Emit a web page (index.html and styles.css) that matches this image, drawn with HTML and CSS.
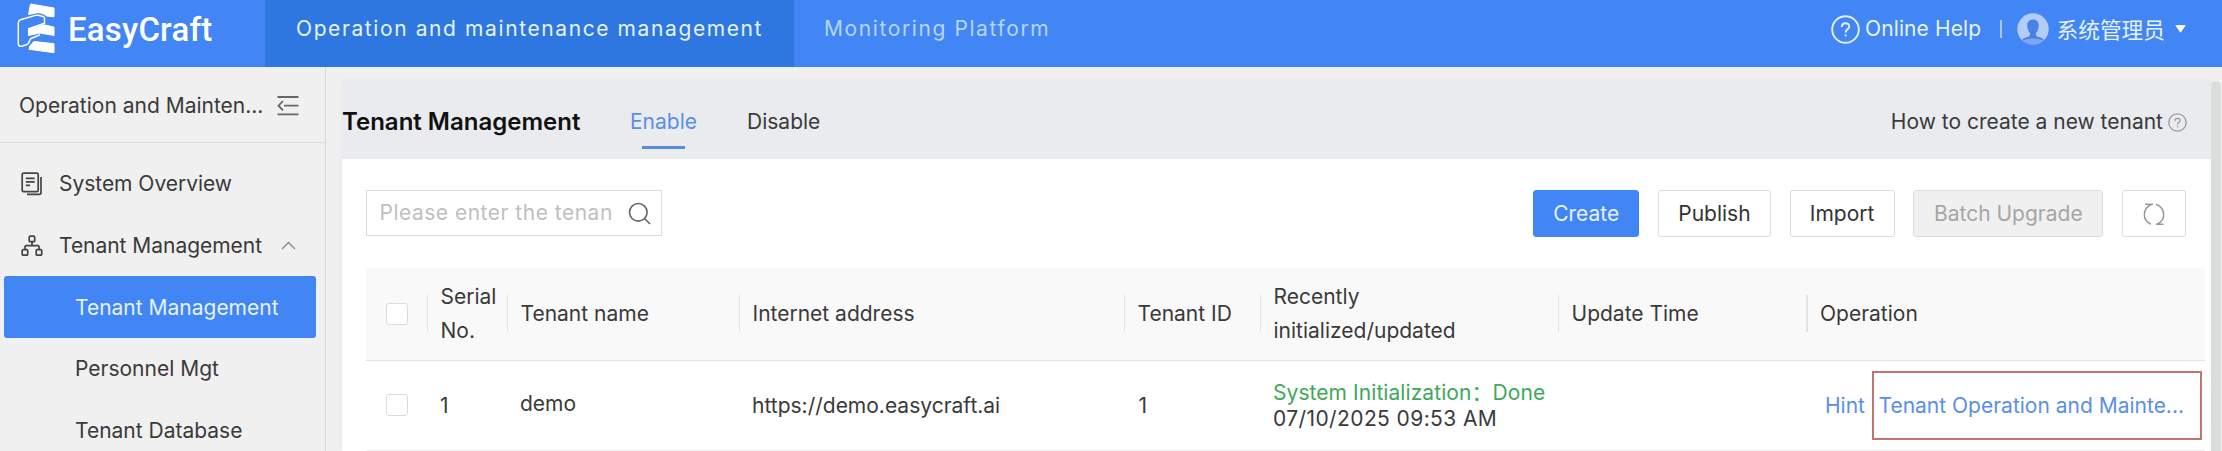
FILE: index.html
```html
<!DOCTYPE html>
<html lang="en">
<head>
<meta charset="utf-8">
<title>EasyCraft</title>
<link rel="stylesheet" href="styles.css">
</head>
<body>
<header class="topbar">
  <div class="brand">
    <svg class="brand-logo" width="40" height="52" viewBox="16 2 40 52">
      <g fill="#fff" stroke="#fff" stroke-width="1" stroke-linejoin="round">
        <path d="M30.5 4 54 8V16.8L46.500 16C45 14 41 12.700 37.500 12.700L28.500 14.500Z"/>
        <path d="M28.500 29.500 44 24.800 54 27V35.500L40 33 28.500 35.500Z"/>
        <path d="M30 45.500C32.500 44.500 32 42 34.500 41.500L54 43.700V52.700L29 49.300Z"/>
      </g>
      <path d="M28 29 44.500 23.200V18.500Q44.500 16.800 42.500 16.200L38 15.300Q36.500 15 34.500 15.600L20.500 19.800Q18.300 20.600 18.300 23V43.500Q18.500 46.800 21.500 46.300L26.500 44.800C30 43.500 28.500 40.500 31 38.500L40 34.800" fill="none" stroke="#fff" stroke-width="1.500"/>
    </svg>
    <span class="brand-name">EasyCraft</span>
  </div>
  <nav class="platforms">
    <a class="platform platform-active">Operation and maintenance management</a>
    <a class="platform">Monitoring Platform</a>
  </nav>
  <div class="account">
    <svg width="29" height="29" viewBox="0 0 29 29" fill="none" stroke="#e4f0ff" stroke-width="1.900">
      <circle cx="14.500" cy="14.500" r="13.300"/>
      <path d="M10.800 11.900C10.800 7 18.300 7 18.300 11.600C18.300 14.600 14.600 14.200 14.600 17.400"/>
      <path d="M14.600 19.300V21.400"/>
    </svg>
    <span class="help-label">Online Help</span>
    <span class="account-sep"></span>
    <svg class="avatar" width="32" height="32" viewBox="0 0 32 32">
      <circle cx="16" cy="16" r="15.700" fill="#b3cdfb"/>
      <path d="M16 6.500C12.300 6.500 10 9 10.200 12.700C10.400 16 11.500 18.500 13 20C13.500 22.500 12 23.600 9.500 24.300C7.500 24.900 6 25.500 5.200 27.200Q10 31.700 16 31.700T26.800 27.200C26 25.500 24.500 24.900 22.500 24.300C20 23.600 18.500 22.500 19 20C20.500 18.500 21.600 16 21.800 12.700C22 9 19.700 6.500 16 6.500Z" fill="#4a82e4"/>
      <path d="M5.200 27.200Q10 31.700 16 31.700T26.800 27.200Q16 24 5.200 27.200Z" fill="#7ba7f4"/>
    </svg>
    <span class="user-name">系统管理员</span>
    <svg width="11" height="8" viewBox="0 0 11 8"><path d="M.8.500H10.200L5.500 7.300Z" fill="#fff" stroke="#fff" stroke-linejoin="round" stroke-width=".8"/></svg>
  </div>
</header>

<div class="body">
  <aside class="sidebar">
    <div class="sidebar-head">
      <span>Operation and Mainten...</span>
      <svg width="22" height="22" viewBox="0 0 22 22" fill="none" stroke="#666" stroke-width="1.800"><path d="M.5 2H21.500M7 10.700H21.500M.5 19.300H21.500M6 6 1.500 10.700 6 15.400"/></svg>
    </div>
    <ul class="menu">
      <li class="menu-item">
        <svg class="menu-icon" width="22" height="24" viewBox="0 0 22 24" fill="none" stroke="#444" stroke-width="1.700"><rect x="1.200" y="1.200" width="16" height="18.500" rx="1.500"/><path d="M20 5V20.500Q20 22.300 18.200 22.300H6M4.800 6.300H13.700M4.800 9.800H13.700M4.800 13.300H9"/></svg>
        <span>System Overview</span>
      </li>
      <li class="menu-item">
        <svg class="menu-icon" width="22" height="22" viewBox="0 0 22 22" fill="none" stroke="#444" stroke-width="1.700"><rect x="8.200" y="1.200" width="5.500" height="5.500" rx="1"/><rect x="1.200" y="14.700" width="5.500" height="5.500" rx="1"/><rect x="15.200" y="14.700" width="5.500" height="5.500" rx="1"/><path d="M11 6.700V10.500M4 14.700V11.700Q4 10.600 5.100 10.600H16.900Q18 10.600 18 11.700V14.700"/></svg>
        <span>Tenant Management</span>
        <svg class="menu-chevron" width="15" height="9" viewBox="0 0 15 9" fill="none" stroke="#888" stroke-width="1.400"><path d="M1 8 7.500 1.500 14 8"/></svg>
      </li>
      <li class="menu-sub menu-sub-active">Tenant Management</li>
      <li class="menu-sub">Personnel Mgt</li>
      <li class="menu-sub">Tenant Database</li>
    </ul>
  </aside>

  <main class="content">
    <section class="panel">
      <div class="panel-head">
        <h1 class="panel-title">Tenant Management</h1>
        <a class="tab tab-active">Enable</a>
        <a class="tab">Disable</a>
        <span class="howto">How to create a new tenant</span>
        <svg width="19" height="19" viewBox="0 0 19 19" fill="none" stroke="#999" stroke-width="1.300"><circle cx="9.500" cy="9.500" r="8.700"/><path d="M7 7.700C7 4.500 12 4.500 12 7.600C12 9.600 9.500 9.300 9.500 11.500M9.500 12.700V14.200"/></svg>
      </div>
      <div class="toolbar">
        <div class="search">
          <span class="search-text">Please enter the tenan</span>
          <svg width="23" height="23" viewBox="0 0 23 23" fill="none" stroke="#666" stroke-width="1.600"><circle cx="10.300" cy="10.300" r="8.800"/><path d="M16.500 16.500 22 22"/></svg>
        </div>
        <div class="actions">
          <button class="btn btn-primary">Create</button>
          <button class="btn btn-publish">Publish</button>
          <button class="btn btn-import">Import</button>
          <button class="btn btn-disabled">Batch Upgrade</button>
          <button class="btn btn-refresh"><svg width="24" height="24" viewBox="0 0 24 24" fill="none" stroke="#999" stroke-width="1.500"><path d="M3 2.200H11M10 2.200C.5 6 -.5 18 9 22.200M14 2.200C23.500 6 24.500 18 15 22.200M14 22.200H21.500"/></svg></button>
        </div>
      </div>
      <div class="table">
        <div class="row row-head">
          <div class="th th-check"><span class="checkbox"></span></div>
          <div class="th"><span>Serial<br>No.</span></div>
          <div class="th">Tenant name</div>
          <div class="th">Internet address</div>
          <div class="th">Tenant ID</div>
          <div class="th"><span>Recently<br>initialized/updated</span></div>
          <div class="th">Update Time</div>
          <div class="th">Operation</div>
        </div>
        <div class="row row-data">
          <div class="td td-check"><span class="checkbox"></span></div>
          <div class="td">1</div>
          <div class="td td-name">demo</div>
          <div class="td">https://demo.easycraft.ai</div>
          <div class="td td-id">1</div>
          <div class="td td-status"><span class="status">System Initialization<span class="colon">：</span>Done</span><span class="date">07/10/2025 09:53 AM</span></div>
          <div class="td"></div>
          <div class="td td-ops"><a class="link">Hint</a><a class="link link-marked">Tenant Operation and Mainte...</a></div>
        </div>
      </div>
    </section>
    <div class="scrollbar"></div>
  </main>
</div>
</body>
</html>
```
FILE: styles.css
```css
* { box-sizing: border-box; }
body {
  margin: 0;
  width: 2222px;
  height: 451px;
  overflow: hidden;
  display: flex;
  flex-direction: column;
  font: 400 21px/26px Inter, "Noto Sans CJK SC", sans-serif;
  color: #3a3a3a;
  background: #f0f0f0;
  white-space: nowrap;
}
svg { display: block; flex: none; }

.topbar { display: flex; flex: none; height: 67px; background: #4285f4; }
.brand { display: flex; width: 265px; padding: 2px 0 0 16px; }
.brand-name {
  margin: 10px 0 0 12px;
  font: 500 33px/36px Roboto, sans-serif;
  letter-spacing: .2px;
  color: #fff;
}
.platforms { display: flex; }
.platform {
  padding: 16px 29px 0 30px;
  letter-spacing: 1.6px;
  color: #b5d5ff;
}
.platform-active { width: 529px; padding-left: 31px; background: #2e77e0; color: #e4f3ff; }
.account { display: flex; align-items: center; height: 58px; margin-left: auto; padding-right: 36px; color: #e4f3ff; }
.help-label { margin-left: 5px; width: 115px; letter-spacing: .1px; }
.account-sep { width: 1.5px; height: 18px; margin: 0 15px 0 20px; background: #a6c8fb; }
.user-name { margin: 0 10px 0 8px; font: 21.7px/26px "Noto Sans CJK SC", sans-serif; }

.body { display: flex; flex: 1; min-height: 0; }
.sidebar { width: 326px; flex: none; border-right: 1.5px solid #dadada; }
.sidebar-head {
  display: flex;
  align-items: center;
  justify-content: space-between;
  height: 76px;
  padding: 2px 26px 0 19px;
  border-bottom: 1.5px solid #dcdcdc;
}
.menu { list-style: none; margin: 0; padding: 10px 0 0; }
.menu-item { display: flex; align-items: center; height: 61.7px; padding-left: 21px; }
.menu-icon { margin-right: 16px; }
.menu-item span { padding-top: 1px; letter-spacing: -.03px; }
.menu-chevron { margin-left: 19px; }
.menu-sub { display: flex; align-items: center; height: 61.7px; margin: 0 9.500px 0 4px; padding: 1px 0 0 71px; }
.menu-sub-active { background: #4285f4; border-radius: 3px; color: #e4f3ff; }

.content { display: flex; flex: 1; padding-top: 13px; padding-left: 16px; }
.panel { width: 1869px; background: #fff; box-shadow: 0 0 4px rgba(0, 0, 0, .04); }
.panel-head { display: flex; align-items: center; height: 79px; padding: 5px 24px 0 0; background: #eaebef; }
.panel-title { margin: 0 50px 0 0; width: 238px; font-size: 24px; font-weight: 600; line-height: 30px; color: #111; }
.tab {
  position: relative;
  margin-right: 50px;
}
.tab-active { color: #5a8fe6; }
.tab-active::after {
  content: "";
  position: absolute;
  left: 12px;
  bottom: -14px;
  width: 43px;
  height: 3px;
  background: #5a8bdc;
}
.howto { margin-left: auto; margin-right: 5px; }
.toolbar { display: flex; justify-content: space-between; padding: 31px 25px 31px 24px; }
.search {
  display: flex;
  align-items: center;
  width: 296px;
  height: 46px;
  padding-left: 12.500px;
  border: 1.5px solid #dcdcdc;
}
.search-text { width: 235px; margin-right: 13px; letter-spacing: .5px; color: #bfbfbf; }
.actions { display: flex; gap: 18.7px; }
.btn {
  display: flex;
  align-items: center;
  justify-content: center;
  height: 47px;
  padding: 0;
  border: 1.5px solid #dcdcdc;
  border-radius: 3px;
  background: #fff;
  font: inherit;
  color: #333;
}
.btn-primary { width: 106px; background: #4285f4; border-color: #4285f4; color: #e4f3ff; }
.btn-publish { width: 113px; }
.btn-import { width: 105px; }
.btn-disabled { width: 190px; background: #f0f0f0; color: #a6a6a6; }
.btn-refresh { width: 64px; }

.table { margin: 0 6px 0 24px; }
.row { display: grid; grid-template-columns: 60.5px 80px 232px 385px 136px 298px 248.5px 1fr; }
.row-head { height: 92.5px; background: #f9f9f9; border-bottom: 1.5px solid #e2e2e2; line-height: 33.5px; }
.th { display: flex; align-items: center; }
.th::before { content: ""; width: 1.5px; height: 37px; margin-right: 12.500px; background: #e2e2e2; }
.th-check::before { display: none; }
.row-data { height: 90px; border-bottom: 1px solid #eee; }
.td { display: flex; align-items: center; padding: 2px 0 0 13.500px; }
.th-check, .td-check { padding: 0 0 0 20px; }
.td-name { padding-top: 0; padding-bottom: 2px; }
.td-id { padding-left: 15px; }
.checkbox { width: 22px; height: 22px; border: 1.5px solid #dcdcdc; border-radius: 3px; background: #fff; }
.td-status { flex-direction: column; align-items: flex-start; justify-content: center; padding-top: 1px; }
.status { color: #3fa85a; letter-spacing: .07px; }
.colon { font-family: "Noto Sans CJK SC", sans-serif; line-height: 1; }
.date { letter-spacing: .4px; }
.td-ops { padding: 0 0 0 19px; gap: 7px; }
.link { padding-top: 2px; color: #5a8fe6; }
.link-marked {
  display: flex;
  align-items: center;
  width: 330px;
  height: 69px;
  padding-left: 4.500px;
  border: 2px solid #c0766c;
}
.scrollbar { width: 10px; margin-top: 1px; border-radius: 5px 5px 0 0; background: #dbdcdc; }
```
